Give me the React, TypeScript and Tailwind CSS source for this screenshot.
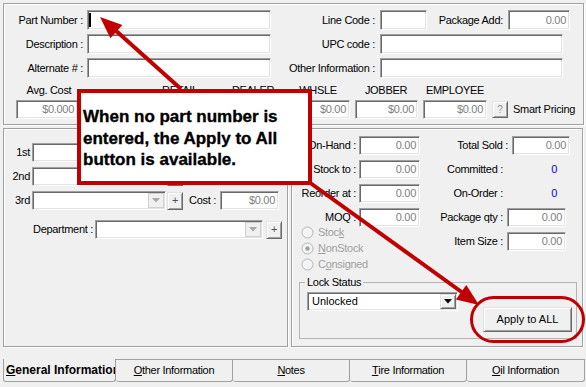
import React from "react";

const sunken =
  "bg-white border border-t-[#a0a0a0] border-l-[#a0a0a0] border-b-white border-r-white shadow-[inset_1px_1px_0_#696969,inset_-1px_-1px_0_#e3e3e3]";
const raised =
  "bg-[#f0f0f0] border border-t-[#e3e3e3] border-l-[#e3e3e3] border-b-[#696969] border-r-[#696969] shadow-[inset_1px_1px_0_#ffffff,inset_-1px_-1px_0_#a0a0a0]";
const group = "border border-[#a0a0a0] shadow-[inset_1px_1px_0_#ffffff,1px_1px_0_#ffffff]";

function Field({ className = "", value = "", children }: { className?: string; value?: string; children?: React.ReactNode }) {
  return (
    <div className={`${sunken} ${className} flex items-center justify-end pr-[3px] text-[#808080]`}>
      {children}
      {value}
    </div>
  );
}

function Plus({ className = "" }: { className?: string }) {
  return (
    <div className={`${raised} ${className} flex items-center justify-center text-[#505050] text-[11px]`}>+</div>
  );
}

function Combo({ className = "", text = "", disabled = true }: { className?: string; text?: string; disabled?: boolean }) {
  return (
    <div className={`${sunken} ${className} flex items-stretch p-[1px]`}>
      <div className="flex-1 flex items-center pl-[3px] tracking-normal">{text}</div>
      <div
        className={`w-[16px] flex items-center justify-center ${
          disabled ? "bg-[#f0f0f0] border border-[#d0d0d0]" : raised
        }`}
      >
        <svg width="8" height="5" viewBox="0 0 8 5">
          <path d="M0 0H8L4 4.5Z" fill={disabled ? "#a8a8a8" : "#000000"} />
        </svg>
      </div>
    </div>
  );
}

function Radio({ checked = false, children }: { checked?: boolean; children: React.ReactNode }) {
  return (
    <div className="h-[16px] flex items-center">
      <svg width="13" height="13" viewBox="0 0 13 13" className="ml-[9px]">
        <circle cx="6.5" cy="6.5" r="5.5" fill="#f4f4f4" stroke="#b4b4b4" />
        {checked && <circle cx="6.5" cy="6.5" r="2.2" fill="#a0a0a0" />}
      </svg>
      <span className="ml-[4px] text-[#a0a0a0]">{children}</span>
    </div>
  );
}

function U({ children }: { children: React.ReactNode }) {
  return <span className="underline underline-offset-[1px]">{children}</span>;
}

export default function App() {
  return (
    <div className="relative w-[586px] h-[387px] overflow-hidden bg-[#f0f0f0] font-['Liberation_Sans',Arial,sans-serif] text-[11px] leading-[13px] tracking-[-0.3px] text-black">
      <div className="pt-[3px] pl-[3px] flex flex-col">
        {/* Top group */}
        <div className={`w-[581px] h-[122px] ${group} flex flex-col pt-[6px]`}>
          <div className="flex items-center h-[20px]">
            <div className="w-[79px] text-right">Part Number :</div>
            <Field className="ml-[4px] w-[184px] h-[20px] !justify-start">
              <div className="ml-[1px] w-[2px] h-[14px] bg-black" />
            </Field>
            <div className="w-[104px] text-right">Line Code :</div>
            <Field className="ml-[5px] w-[47px] h-[20px]" />
            <div className="w-[76px] text-right">Package Add:</div>
            <Field className="ml-[5px] w-[62px] h-[20px]" value="0.00" />
          </div>
          <div className="flex items-center h-[20px] mt-[4px]">
            <div className="w-[79px] text-right">Description :</div>
            <Field className="ml-[4px] w-[184px] h-[20px]" />
            <div className="w-[104px] text-right">UPC code :</div>
            <Field className="ml-[5px] w-[183px] h-[20px]" />
          </div>
          <div className="flex items-center h-[20px] mt-[4px]">
            <div className="w-[79px] text-right">Alternate # :</div>
            <Field className="ml-[4px] w-[184px] h-[20px]" />
            <div className="w-[104px] text-right">Other Information :</div>
            <Field className="ml-[5px] w-[183px] h-[20px]" />
          </div>
          <div className="flex items-center h-[14px] mt-[5px]">
            <div className="ml-[13px] w-[64px] text-center">Avg. Cost</div>
            <div className="ml-[67px] w-[64px] text-center">RETAIL</div>
            <div className="ml-[9px] w-[64px] text-center">DEALER</div>
            <div className="ml-[1px] w-[64px] text-center">WHSLE</div>
            <div className="ml-[4px] w-[64px] text-center">JOBBER</div>
            <div className="ml-[5px] w-[64px] text-center">EMPLOYEE</div>
          </div>
          <div className="flex items-center h-[19px] mt-[3px]">
            <Field className="ml-[12px] w-[62px] h-[19px]" value="$0.000" />
            <Field className="ml-[9px] w-[62px] h-[19px]" value="$0.00" />
            <Field className="ml-[5px] w-[62px] h-[19px]" value="$0.00" />
            <Field className="ml-[5px] w-[62px] h-[19px]" value="$0.00" />
            <Field className="ml-[5px] w-[62px] h-[19px]" value="$0.00" />
            <Field className="ml-[5px] w-[63px] h-[19px]" value="$0.00" />
            <Field className="ml-[5px] w-[64px] h-[19px]" value="$0.00" />
            <div className={`ml-[5px] w-[16px] h-[17px] ${raised} flex items-center justify-center text-[#909090] text-[10px]`}>?</div>
            <div className="ml-[5px] whitespace-nowrap">Smart Pricing</div>
          </div>
        </div>

        {/* Lower groups */}
        <div className="flex mt-[3px] gap-[3px]">
          <div className={`w-[285px] h-[219px] ${group} flex flex-col pt-[14px]`}>
            <div className="flex items-center h-[19px]">
              <div className="w-[26px] text-right">1st</div>
              <Combo className="ml-[2px] w-[134px] h-[19px]" />
              <Plus className="ml-[1px] w-[16px] h-[18px]" />
            </div>
            <div className="flex items-center h-[19px] mt-[5px]">
              <div className="w-[26px] text-right">2nd</div>
              <Combo className="ml-[2px] w-[134px] h-[19px]" />
              <Plus className="ml-[1px] w-[16px] h-[18px]" />
            </div>
            <div className="flex items-center h-[19px] mt-[5px]">
              <div className="w-[26px] text-right">3rd</div>
              <Combo className="ml-[2px] w-[134px] h-[19px]" />
              <Plus className="ml-[1px] w-[16px] h-[18px]" />
              <div className="w-[33px] text-right">Cost :</div>
              <Field className="ml-[4px] w-[59px] h-[19px]" value="$0.00" />
            </div>
            <div className="flex items-center h-[19px] mt-[10px]">
              <div className="w-[89px] text-right">Department :</div>
              <Combo className="ml-[2px] w-[168px] h-[19px]" />
              <Plus className="ml-[3px] w-[16px] h-[18px]" />
            </div>
          </div>

          <div className={`w-[292px] h-[219px] ${group} flex flex-col pt-[7px]`}>
            <div className="flex">
              <div className="w-[128px] flex flex-col">
                {["On-Hand :", "Stock to :", "Reorder at :", "MOQ :"].map((l, i) => (
                  <div key={l} className={`flex items-center h-[19px] ${i ? "mt-[5px]" : ""}`}>
                    <div className="w-[64px] text-right whitespace-nowrap">{l}</div>
                    <Field className="ml-[3px] w-[61px] h-[19px]" value="0.00" />
                  </div>
                ))}
                <div className="flex flex-col mt-[-3px]">
                  <Radio>
                    Stoc<U>k</U>
                  </Radio>
                  <Radio checked>
                    <U>N</U>onStock
                  </Radio>
                  <Radio>
                    C<U>o</U>nsigned
                  </Radio>
                </div>
              </div>
              <div className="flex flex-col">
                <div className="flex items-center h-[19px]">
                  <div className="w-[88px] text-right">Total Sold :</div>
                  <Field className="ml-[4px] w-[58px] h-[19px]" value="0.00" />
                </div>
                <div className="flex items-center h-[19px] mt-[5px]">
                  <div className="w-[83px] text-right">Committed :</div>
                  <div className="w-[54px] text-right text-[#0000ff]">0</div>
                </div>
                <div className="flex items-center h-[19px] mt-[5px]">
                  <div className="w-[83px] text-right">On-Order :</div>
                  <div className="w-[54px] text-right text-[#0000ff]">0</div>
                </div>
                <div className="flex items-center h-[19px] mt-[5px]">
                  <div className="w-[83px] text-right">Package qty :</div>
                  <Field className="ml-[4px] w-[59px] h-[19px]" value="0.00" />
                </div>
                <div className="flex items-center h-[19px] mt-[5px]">
                  <div className="w-[83px] text-right">Item Size :</div>
                  <Field className="ml-[4px] w-[59px] h-[19px]" value="0.00" />
                </div>
              </div>
            </div>
            <fieldset className="ml-[7px] mt-[4px] w-[278px] h-[63px] border border-[#b4b4b4] pl-[5px] pr-[4px]">
              <legend className="px-[2px] leading-[13px]">Lock Status</legend>
              <div className="flex items-start">
                <Combo className="ml-[2px] mt-[3px] w-[151px] h-[19px]" text="Unlocked" disabled={false} />
                <div
                  className={`ml-auto mt-[18px] w-[89px] h-[25px] ${raised} flex items-center justify-center tracking-normal`}
                >
                  Apply to ALL
                </div>
              </div>
            </fieldset>
          </div>
        </div>

        {/* Tabs */}
        <div className="flex mt-[12px] h-[23px]">
          <div className="w-[113px] border-l border-r border-b border-[#a0a0a0] rounded-b-[3px] pl-[2px] overflow-hidden whitespace-nowrap flex items-center font-bold text-[12px] tracking-normal">
            <U>G</U>eneral Information
          </div>
          {[
            ["O", "ther Information", "w-[117px]"],
            ["N", "otes", "w-[117px]"],
            ["T", "ire Information", "w-[117px]"],
            ["O", "il Information", "w-[118px]"],
          ].map(([a, b, w], i) => (
            <div
              key={i}
              className={`${w} border-t border-r border-b border-[#a0a0a0] rounded-b-[3px] flex items-center justify-center whitespace-nowrap`}
            >
              <U>{a}</U>
              {b}
            </div>
          ))}
        </div>
      </div>

      {/* Callout */}
      <div className="absolute left-[77px] top-[89px] w-[235px] h-[96px] border-[4px] border-[#c00000] bg-white pl-[2px] pt-[13px] font-bold text-[17px] leading-[21.7px] tracking-normal text-black [-webkit-text-stroke:0.35px_black]">
        <div>When no part number is</div>
        <div>entered, the Apply to All</div>
        <div>button is available.</div>
      </div>

      {/* Arrows & highlight */}
      <svg className="absolute inset-0 pointer-events-none" width="586" height="387" viewBox="0 0 586 387">
        <line x1="181" y1="89" x2="114" y2="29" stroke="#c00000" strokeWidth="4" />
        <polygon points="100,17 122.4,24.9 110.4,38.3" fill="#c00000" />
        <line x1="309" y1="182" x2="463" y2="293" stroke="#c00000" strokeWidth="4" />
        <polygon points="479,305 455.9,299.5 466.3,284.9" fill="#c00000" />
        <rect x="471.5" y="297.5" width="112" height="44" rx="22" ry="22" fill="none" stroke="#c00000" strokeWidth="3" />
      </svg>
    </div>
  );
}
